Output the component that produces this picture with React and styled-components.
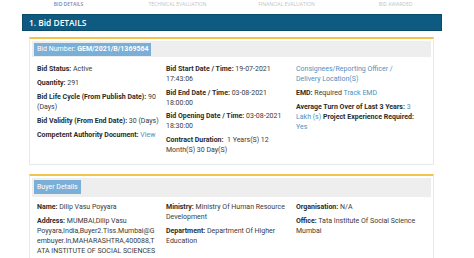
import React from "react";
import styled, { createGlobalStyle } from "styled-components";

const GlobalStyle = createGlobalStyle`
  body {
    margin: 0;
    background: #ffffff;
    font-family: Roboto, "Liberation Sans", sans-serif;
  }
`;

const tabs = ["BID DETAILS", "TECHNICAL EVALUATION", "FINANCIAL EVALUATION", "BID AWARDED"];

const Page = styled.div`
  width: 474px;
  height: 258px;
  overflow: hidden;
`;

const TabBar = styled.div`
  display: grid;
  grid-template-columns: repeat(4, 109px);
  margin-left: 14px;
  height: 14px;
  padding-top: 1px;
  box-sizing: border-box;
`;

const Tab = styled.div`
  text-align: center;
  font-family: "Open Sans", sans-serif;
  font-size: 5px;
  line-height: 7px;
  color: ${(p) => (p.active ? "#7388a6" : "#bfc2c7")};
  font-weight: ${(p) => (p.active ? 600 : 400)};
`;

const Section = styled.div`
  margin-left: 22px;
  width: 420px;
`;

const TitleBar = styled.div`
  height: 17px;
  background: #0f5a80;
  border: 1px solid #0a4a6b;
  box-sizing: border-box;
  color: #ffffff;
  font-family: "Open Sans", sans-serif;
  font-size: 8.4px;
  font-weight: 600;
  line-height: 15px;
  padding-left: 6px;
`;

const Card = styled.div`
  margin: 6px 8px 0 7px;
  border: 1px solid #e6e9ec;
  border-top: 2px solid #f4c24f;
  padding: 2px 2px 9px 2px;
  background: #fff;
  & + & {
    margin-top: 9px;
  }
`;

const CardHead = styled.div`
  background: #eeeeee;
  padding: 0 2px;
  height: ${(p) => p.h}px;
  display: flex;
  align-items: center;
`;

const Label = styled.div`
  background: #7aafd8;
  color: #ffffff;
  font-size: 7px;
  line-height: ${(p) => p.lh}px;
  padding: 0 3px;
  b {
    font-weight: 700;
  }
`;

const Grid = styled.div`
  display: grid;
  grid-template-columns: 129px 130px 130px;
  padding: ${(p) => p.top}px 0 0 5px;
`;

const Col = styled.div`
  display: flex;
  flex-direction: column;
  gap: ${(p) => p.gap}px;
  padding-right: ${(p) => p.pr || 6}px;
`;

const Item = styled.div`
  font-size: 7px;
  line-height: 10px;
  color: #3a3a3a;
  overflow-wrap: anywhere;
  b {
    font-weight: 700;
    color: #2b2b2b;
  }
`;

const Link = styled.span`
  color: #4f8fbe;
`;

export default function App() {
  return (
    <Page>
      <GlobalStyle />
      <TabBar>
        {tabs.map((t, i) => (
          <Tab key={t} active={i === 0}>
            {t}
          </Tab>
        ))}
      </TabBar>
      <Section>
        <TitleBar>1. Bid DETAILS</TitleBar>
        <Card>
          <CardHead h={16}>
            <Label lh={13}>
              Bid Number: <b>GEM/2021/B/1369564</b>
            </Label>
          </CardHead>
          <Grid top={7}>
            <Col gap={4}>
              <Item>
                <b>Bid Status:</b> Active
              </Item>
              <Item>
                <b>Quantity:</b> 291
              </Item>
              <Item>
                <b>Bid Life Cycle (From Publish Date):</b> 90 (Days)
              </Item>
              <Item>
                <b>Bid Validity (From End Date):</b> 30 (Days)
              </Item>
              <Item>
                <b>Competent Authority Document:</b> <Link>View</Link>
              </Item>
            </Col>
            <Col gap={3.5}>
              <Item>
                <b>Bid Start Date / Time:</b> 19-07-2021 17:43:06
              </Item>
              <Item>
                <b>Bid End Date / Time:</b> 03-08-2021 18:00:00
              </Item>
              <Item>
                <b>Bid Opening Date / Time:</b> 03-08-2021 18:30:00
              </Item>
              <Item>
                <b>Contract Duration:</b>&nbsp; 1 Years(S) 12 Month(S) 30 Day(S)
              </Item>
            </Col>
            <Col gap={4} pr={10}>
              <Item>
                <Link>Consignees/Reporting Officer / Delivery Location(S)</Link>
              </Item>
              <Item>
                <b>EMD:</b> Required <Link>Track EMD</Link>
              </Item>
              <Item>
                <b>Average Turn Over of Last 3 Years:</b> <Link>3 Lakh (s)</Link>{" "}
                <b>Project Experience Required:</b> <Link>Yes</Link>
              </Item>
            </Col>
          </Grid>
        </Card>
        <Card>
          <CardHead h={19}>
            <Label lh={14}>Buyer Details</Label>
          </CardHead>
          <Grid top={5}>
            <Col gap={4} pr={9}>
              <Item>
                <b>Name:</b> Dilip Vasu Poyyara
              </Item>
              <Item>
                <b>Address:</b> MUMBAI,Dilip Vasu Poyyara,India,Buyer2.Tiss.Mumbai@Gembuyer.In,MAHARASHTRA,400088,TATA INSTITUTE OF SOCIAL SCIENCES VN PURAV MARG, DEONAR
              </Item>
            </Col>
            <Col gap={4}>
              <Item>
                <b>Ministry:</b> Ministry Of Human Resource Development
              </Item>
              <Item>
                <b>Department:</b> Department Of Higher Education
              </Item>
            </Col>
            <Col gap={4} pr={10}>
              <Item>
                <b>Organisation:</b> N/A
              </Item>
              <Item>
                <b>Office:</b> Tata Institute Of Social Science Mumbai
              </Item>
            </Col>
          </Grid>
        </Card>
      </Section>
    </Page>
  );
}
